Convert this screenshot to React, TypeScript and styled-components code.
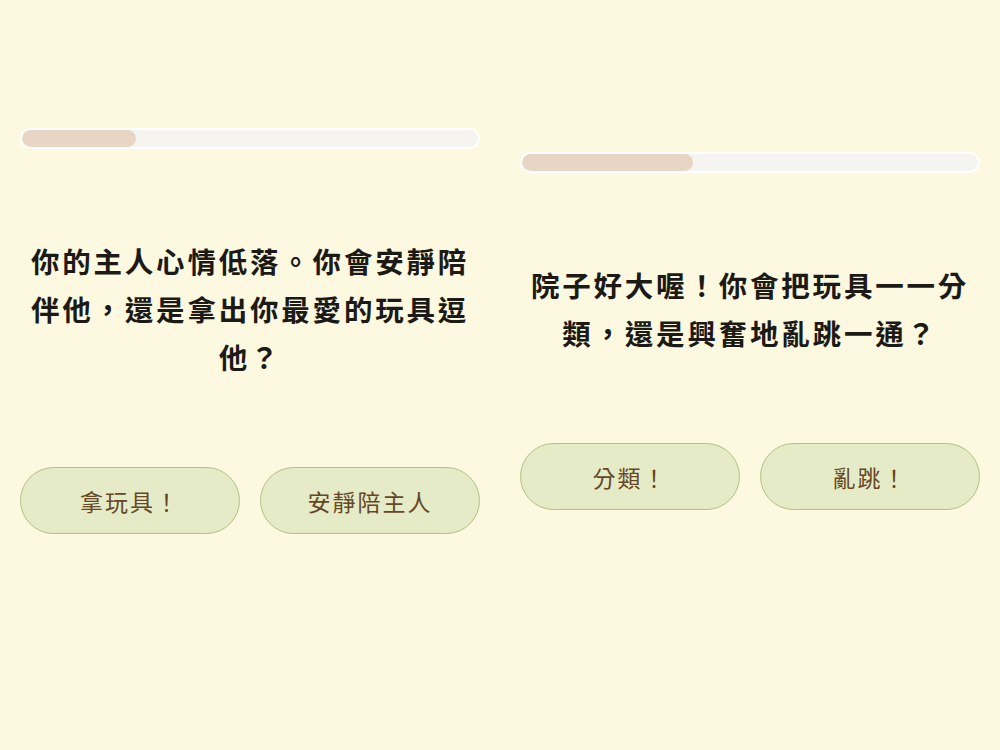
import React from "react";
import styled, { createGlobalStyle } from "styled-components";

const GlobalStyle = createGlobalStyle`
  html, body {
    margin: 0;
    padding: 0;
    background: #fdf8e0;
  }
  * { box-sizing: border-box; }
  body {
    font-family: "Noto Sans CJK TC", "Noto Sans", sans-serif;
  }
`;

const Page = styled.div`
  display: flex;
  width: 1000px;
  height: 750px;
  background: #fdf8e0;
`;

const Column = styled.section`
  width: 500px;
  height: 662px;
  padding: 0 20px;
  display: flex;
  flex-direction: column;
  justify-content: center;
`;

const Track = styled.div`
  height: 21px;
  border: 2.5px solid #ffffff;
  border-radius: 999px;
  background: #f6f4f0;
  overflow: hidden;
`;

const Fill = styled.div`
  height: 100%;
  border-radius: 999px;
  background: #e9d5c3;
`;

const Question = styled.h2`
  margin: 88px 0 86px;
  padding: 0 6px;
  font-size: 28.5px;
  font-weight: 700;
  line-height: 48px;
  letter-spacing: 2.8px;
  color: #1c1a16;
  text-align: center;
`;

const Choices = styled.div`
  display: grid;
  grid-template-columns: 1fr 1fr;
  gap: 20px;
`;

const Choice = styled.button`
  height: 67px;
  border: 1.5px solid #b2c184;
  border-radius: 999px;
  background: #e6ebc7;
  color: #654726;
  font-family: "Noto Sans CJK TC", "Noto Sans", sans-serif;
  font-size: 23px;
  font-weight: 400;
  letter-spacing: 2px;
  cursor: pointer;
`;

type Step = {
  progress: number;
  question: string;
  options: string[];
};

const steps: Step[] = [
  {
    progress: 25,
    question: "你的主人心情低落。你會安靜陪伴他，還是拿出你最愛的玩具逗他？",
    options: ["拿玩具！", "安靜陪主人"],
  },
  {
    progress: 37.5,
    question: "院子好大喔！你會把玩具一一分類，還是興奮地亂跳一通？",
    options: ["分類！", "亂跳！"],
  },
];

function QuizCard({ step }: { step: Step }) {
  return (
    <Column>
      <Track>
        <Fill style={{ width: `${step.progress}%` }} />
      </Track>
      <Question>{step.question}</Question>
      <Choices>
        {step.options.map((o) => (
          <Choice key={o}>{o}</Choice>
        ))}
      </Choices>
    </Column>
  );
}

export default function App() {
  return (
    <>
      <GlobalStyle />
      <Page>
        {steps.map((s, i) => (
          <QuizCard key={i} step={s} />
        ))}
      </Page>
    </>
  );
}
